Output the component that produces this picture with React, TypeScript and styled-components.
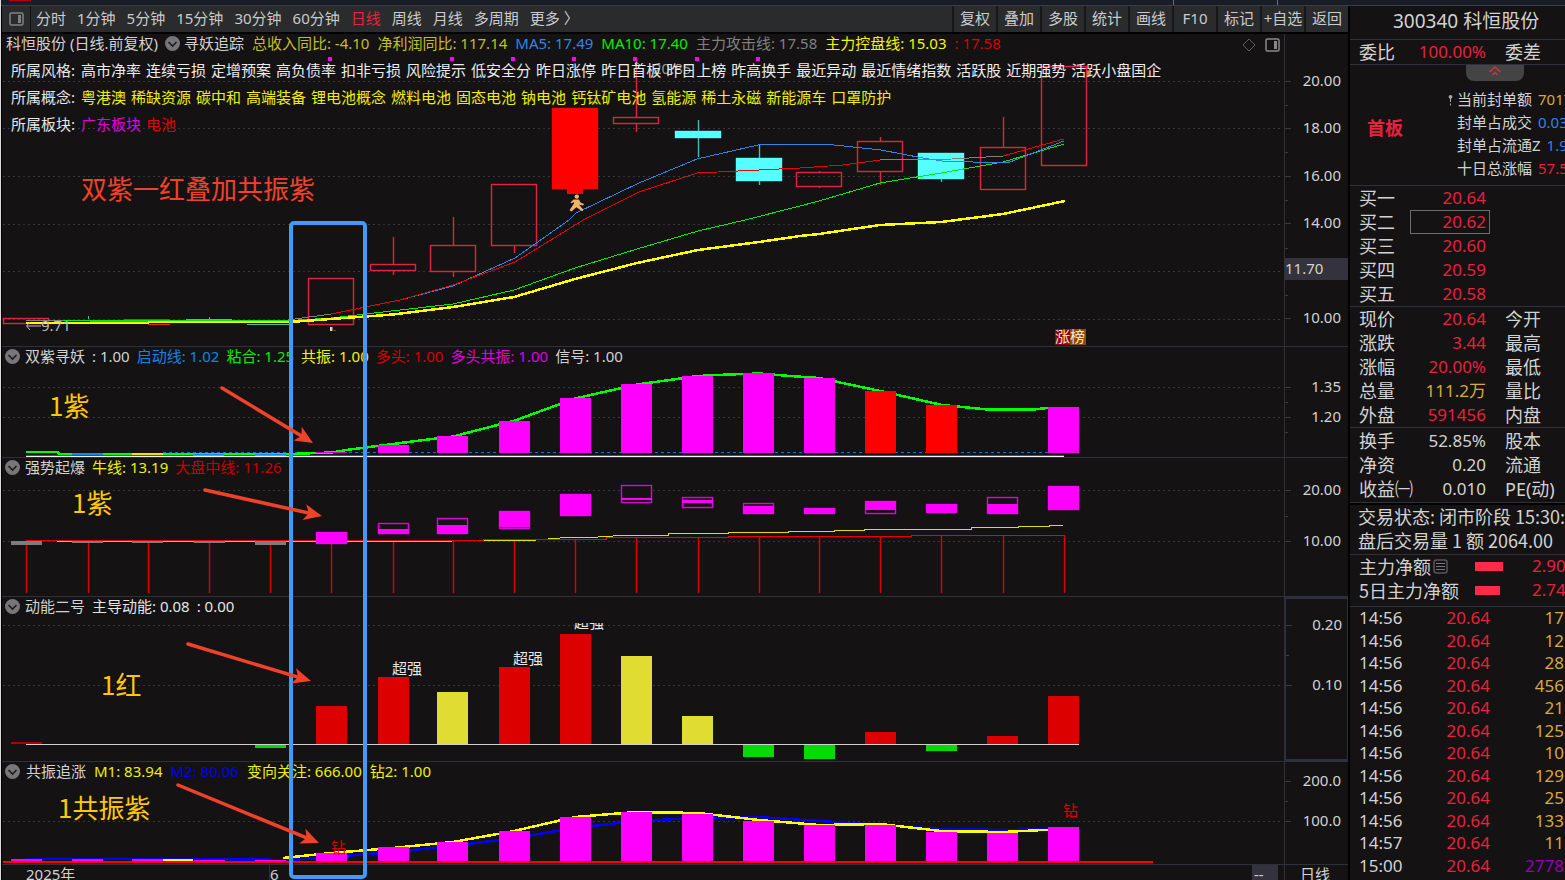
import React from "react";
import styled, { createGlobalStyle, css } from "styled-components";

const LATIN = `"Noto Sans", "Noto Sans CJK SC", sans-serif`;
const CJK = `"Noto Sans CJK SC", "Noto Sans", sans-serif`;

const c = {
  bg: "#141213",
  line: "#2f3138",
  text: "#d2d2d2",
  red: "#e8213c",
  blue: "#2f86e6",
  gold: "#d9a93a",
  magenta: "#ff00ff",
  yellow: "#ffff00",
  green: "#00f000",
  cyan: "#55ffff",
  gray: "#808080",
};

const GlobalStyle = createGlobalStyle`
  * { box-sizing: border-box; }
  body { margin: 0; background: ${c.bg}; }
  button { font: inherit; color: inherit; background: none; border: 0; padding: 0; margin: 0; cursor: pointer; }
  table { border-collapse: collapse; border-spacing: 0; }
  th, td { padding: 0; font-weight: 400; text-align: left; }
`;

/* ---------- page frame ---------- */

const Page = styled.div`
  display: flex;
  flex-direction: column;
  height: 100vh;
  overflow: hidden;
  border-left: 1px solid #dcdcdc;
  background: ${c.bg};
  color: ${c.text};
  font-family: ${LATIN};
  font-size: 15px;
  line-height: 20px;
  white-space: nowrap;
`;

const TopStrip = styled.div`
  flex: none;
  display: flex;
  justify-content: flex-end;
  gap: 103px;
  height: 6px;
  padding-right: 287px;
  background: linear-gradient(#b80010, #b80010) 8px 0 / 22px 1px no-repeat, #181d27;
  border-bottom: 1px solid #393d44;
`;

const StripMark = styled.i`
  width: 1px;
  background: #6a6d73;
`;

const Columns = styled.div`
  flex: 1;
  display: flex;
  min-height: 0;
`;

const Main = styled.main`
  flex: 1;
  min-width: 0;
  display: flex;
  flex-direction: column;
  border-left: 1px solid #000;
`;

/* ---------- toolbar ---------- */

const Toolbar = styled.nav`
  flex: none;
  display: flex;
  align-items: stretch;
  height: 28px;
  background: #2a2b2d;
  border-bottom: 2px solid #000;
  color: #c9cbcd;
`;

const LayoutButton = styled.button`
  display: flex;
  align-items: center;
  justify-content: center;
  width: 29px;
  border-right: 1px solid #101011;
`;

const Periods = styled.div`
  flex: 1;
  display: flex;
  align-items: center;
  gap: 11px;
  padding: 0 0 2px 5px;
`;

const Period = styled.button<{ $active?: boolean }>`
  color: ${(p) => (p.$active ? c.red : "inherit")};
`;

const Tool = styled.button`
  width: 44px;
  padding-bottom: 2px;
  border-left: 2px solid #171718;
  text-align: center;
`;

/* ---------- chart panels ---------- */

const Stage = styled.div`
  position: relative;
  flex: 1;
  display: flex;
  flex-direction: column;
  min-height: 0;
`;

const Panel = styled.section<{ $h: number }>`
  flex: none;
  display: flex;
  height: ${(p) => p.$h}px;
  border-bottom: 1px solid ${c.line};
`;

const PlotArea = styled.div`
  position: relative;
  flex: 1;
  min-width: 0;
`;

const Axis = styled.div<{ $framed?: boolean }>`
  position: relative;
  flex: none;
  width: 64px;
  border-left: 1px solid ${c.line};
  ${(p) =>
    p.$framed &&
    css`
      border: 2px solid #2c303c;
      border-right-width: 1px;
    `}
`;

const Canvas = styled.svg`
  position: absolute;
  top: 0;
  left: 0;
  width: 100%;
  height: 100%;
  overflow: hidden;
  font-family: ${LATIN};
  font-size: 15px;
`;

const Overlay = styled(Canvas)`
  pointer-events: none;
`;

const Legend = styled.div<{ $gap?: number; $pad?: number }>`
  position: relative;
  display: flex;
  align-items: center;
  gap: ${(p) => p.$gap ?? 7}px;
  height: 18px;
  padding-left: ${(p) => p.$pad ?? 3}px;
`;

const LegendItem = styled.span<{ $color?: string }>`
  color: ${(p) => p.$color ?? c.text};
`;

const Fold = styled.button<{ $inset?: boolean }>`
  display: flex;
  margin-left: ${(p) => (p.$inset ? -1 : 0)}px;
  margin-right: ${(p) => (p.$inset ? -4 : -2)}px;
`;

const LegendTools = styled.div`
  display: flex;
  gap: 9px;
  align-items: center;
  margin-left: auto;
  padding-right: 4px;
`;

const LegendTool = styled.button`
  display: flex;
  padding-top: 3px;
`;

const TagRows = styled.div`
  position: relative;
  display: flex;
  flex-direction: column;
  gap: 7px;
  padding: 8px 0 0 9px;
`;

const TagRow = styled.div<{ $color: string }>`
  display: flex;
  gap: 5px;
  height: 20px;
  color: ${(p) => p.$color};
`;

const TagLabel = styled.span`
  width: 65px;
  color: #e6e6e6;
`;

const PriceTag = styled.span`
  position: absolute;
  top: 224px;
  left: 0;
  width: 63px;
  height: 22px;
  background: #34323c;
`;

const DateRow = styled.footer`
  flex: 1;
  display: flex;
  min-height: 0;
  overflow: hidden;
  line-height: 18px;
`;

const DateCells = styled.div`
  flex: 1;
  display: flex;
  padding-left: 24px;
`;

const DateCell = styled.span<{ $w: number }>`
  width: ${(p) => p.$w}px;
`;

const MonthCell = styled.span`
  border-left: 1px solid ${c.line};
`;

const Dashes = styled.span`
  width: 26px;
  margin: 0 6px 0 auto;
  padding-left: 2px;
  background: #34323c;
`;

const DatePeriod = styled.span`
  width: 64px;
  padding-left: 15px;
  border-left: 1px solid ${c.line};
`;

/* ---------- annotations drawn over the charts ---------- */

const Note = styled.p<{ $x: number; $y: number; $color?: string }>`
  position: absolute;
  left: ${(p) => p.$x}px;
  top: ${(p) => p.$y}px;
  margin: 0;
  color: ${(p) => p.$color ?? "#ffc800"};
  font-family: ${CJK};
  font-size: 26px;
  line-height: 32px;
`;

/* ---------- side panel ---------- */

const Side = styled.aside`
  flex: none;
  width: 217px;
  overflow: hidden;
  border-left: 2px solid #000;
  font-size: 18px;
  line-height: 24px;
`;

const StockName = styled.h1`
  height: 34px;
  margin: 0;
  padding-left: 43px;
  border-bottom: 1px solid ${c.line};
  font-size: 19px;
  font-weight: 400;
  line-height: 31px;
`;

const Block = styled.section<{ $pad?: string; $heavy?: boolean }>`
  padding: ${(p) => p.$pad ?? "0"};
  border-bottom: 1px solid ${c.line};
  ${(p) =>
    p.$heavy &&
    css`
      box-shadow: 0 2px 0 #000;
      margin-bottom: 2px;
    `}
`;

const QuoteTable = styled.table`
  table-layout: fixed;
  width: 260px;
  tr {
    height: 24px;
  }
  th:first-child {
    width: 60px;
    padding-left: 9px;
  }
  td {
    width: 80px;
  }
  th + td + th {
    padding-left: 15px;
  }
`;

const Value = styled.span<{ $color?: string; $boxed?: boolean }>`
  display: block;
  height: 24px;
  padding-right: 4px;
  text-align: right;
  font-size: 17px;
  color: ${(p) => p.$color ?? c.text};
  ${(p) =>
    p.$boxed &&
    css`
      padding-right: 3px;
      line-height: 22px;
      border: 1px solid #6c6c6c;
    `}
`;

const Seal = styled.section`
  display: grid;
  grid-template-columns: 98px 1fr;
  grid-template-rows: 16px 1fr;
  height: 121px;
  border-bottom: 1px solid ${c.line};
  font-size: 15px;
  line-height: 20px;
`;

const Collapse = styled.button`
  grid-column: 1 / -1;
  justify-self: start;
  display: flex;
  justify-content: center;
  width: 58px;
  height: 16px;
  margin-left: 116px;
  padding-top: 1px;
  border-radius: 0 0 8px 8px;
  background: #444445;
`;

const SealBadge = styled.strong`
  padding: 37px 0 0 17px;
  color: ${c.red};
  font-size: 18px;
  font-weight: 700;
`;

const SealList = styled.ul`
  margin: 0;
  padding: 7px 0 0;
  list-style: none;
  line-height: 23px;
`;

const SealRow = styled.li<{ $color: string }>`
  display: flex;
  gap: 6px;
  height: 23px;
  b {
    font-weight: 400;
    color: ${(p) => p.$color};
  }
`;

const SealMark = styled.span`
  display: flex;
  align-items: center;
  justify-content: flex-end;
  width: 5px;
  margin-right: -2px;
`;

const Status = styled.p`
  height: 24px;
  margin: 0;
  padding-left: 8px;
  font-family: ${CJK};
  line-height: 22px;
`;

const Fund = styled.div`
  display: grid;
  grid-template-columns: 125px 57px auto;
  align-items: center;
  height: 24px;
  padding-bottom: 2px;
  line-height: 22px;
`;

const FundLabel = styled.span`
  display: flex;
  align-items: center;
  gap: 2px;
  padding-left: 9px;
  font-family: ${CJK};
`;

const FundBar = styled.i<{ $w: number }>`
  width: ${(p) => p.$w}px;
  height: 9px;
  background: #ff2a48;
`;

const FundValue = styled.span`
  font-size: 17px;
  color: ${c.red};
`;

const Ticks = styled.table`
  width: 214px;
  height: 270px;
  font-size: 17px;
  line-height: 22px;
  td:first-child {
    width: 70px;
    padding-left: 9px;
  }
  td {
    width: 70px;
    color: ${c.red};
    text-align: right;
  }
  td:first-child {
    color: ${c.text};
    text-align: left;
  }
`;

const Volume = styled.td<{ $big?: boolean }>`
  && {
    width: 74px;
    color: ${(p) => (p.$big ? "#9a00b4" : c.gold)};
  }
`;

/* ---------- icons ---------- */

const FoldIcon = () => (
  <svg width="15" height="15" viewBox="0 0 15 15">
    <circle cx="7.5" cy="7.5" r="7.5" fill="#777779" />
    <path d="M3.5 6 7.5 10 11.5 6" fill="none" stroke="#1c1c1d" strokeWidth="1.6" />
  </svg>
);

const SidebarIcon = ({ stroke }: { stroke: string }) => (
  <svg width="15" height="14" viewBox="0 0 15 14">
    <rect x="1" y="1" width="13" height="12" rx="1.5" fill="none" stroke={stroke} strokeWidth="1.5" />
    <rect x="9" y="3" width="3" height="8" fill={stroke} />
  </svg>
);

const DiamondIcon = () => (
  <svg width="14" height="14" viewBox="0 0 14 14">
    <path d="M7 1 13 7 7 13 1 7Z" fill="none" stroke="#5c5c5e" strokeWidth="1" />
  </svg>
);

const ListIcon = () => (
  <svg width="15" height="15" viewBox="0 0 15 15">
    <rect x="1" y="1" width="13" height="13" rx="2.5" fill="none" stroke="#56565a" strokeWidth="1.5" />
    <path d="M3 4.5h9M3 7.5h9M3 10.5h9" stroke="#77777a" />
  </svg>
);

const CollapseIcon = () => (
  <svg width="14" height="10" viewBox="0 0 14 10">
    <path d="M1.5 6 7 1 12.5 6M4.5 9 7 6.5 9.5 9" fill="none" stroke="#d23438" strokeWidth="1.4" />
  </svg>
);

const PinIcon = () => (
  <svg width="5" height="12" viewBox="0 0 5 12">
    <circle cx="2.5" cy="2.8" r="1.9" fill="#a8a8a8" />
    <path d="M2.5 4v4M2.5 9.5v2" stroke="#a8a8a8" />
  </svg>
);

/* ---------- chart drawing ---------- */

const barX = [11, 72, 132, 194, 255, 316, 378, 437, 499, 560, 621, 682, 743, 804, 865, 926, 987, 1048];
const mid = [26, 88, 148, 209, 270, 331, 393, 453, 514, 575, 636, 698, 759, 819, 880, 941, 1003, 1064];
const BAR_W = 31;

type PlotProps = { top: number; grid: number[]; children: React.ReactNode };

const Plot = ({ top, grid, children }: PlotProps) => (
  <Canvas shapeRendering="crispEdges" aria-hidden="true">
    <g transform={`translate(-2 ${-top})`}>
      {grid.map((y) => (
        <line key={y} x1="3" x2="100%" y1={y + 0.5} y2={y + 0.5} stroke="#34363a" strokeDasharray="2 3" />
      ))}
      {children}
    </g>
  </Canvas>
);

type Mark = [number, string];

const AxisScale = ({ top, marks, minor }: { top: number; marks: Mark[]; minor: number[] }) => (
  <Canvas shapeRendering="crispEdges">
    <g transform={`translate(0 ${-top})`}>
      {marks.map(([y]) => (
        <line key={y} x1="0" x2="6" y1={y + 0.5} y2={y + 0.5} stroke="#3a3d44" />
      ))}
      {minor.map((y) => (
        <line key={y} x1="0" x2="3" y1={y + 0.5} y2={y + 0.5} stroke="#3a3d44" />
      ))}
      {marks.map(([y, label]) => (
        <text key={label} x="56" y={y + 5} textAnchor="end" fill={c.text}>
          {label}
        </text>
      ))}
    </g>
  </Canvas>
);

const Line = ({ pts, color, w = 1 }: { pts: string; color: string; w?: number }) => (
  <polyline points={pts} fill="none" stroke={color} strokeWidth={w} />
);

type Candle = { i: number; top: number; bottom: number; high?: number; low?: number; fill?: string };

const candles: Candle[] = [
  { i: 0, top: 318, bottom: 323 },
  { i: 5, top: 278, bottom: 324 },
  { i: 6, top: 264, bottom: 270, high: 237, low: 275 },
  { i: 7, top: 245, bottom: 271, high: 217, low: 277 },
  { i: 8, top: 184, bottom: 245, low: 253 },
  { i: 9, top: 108, bottom: 188, fill: "#ff0000" },
  { i: 10, top: 117, bottom: 123, high: 60, low: 132 },
  { i: 11, top: 131, bottom: 137, high: 120, low: 157, fill: c.cyan },
  { i: 12, top: 158, bottom: 180, high: 145, low: 185, fill: c.cyan },
  { i: 13, top: 172, bottom: 186, high: 171, low: 188 },
  { i: 14, top: 141, bottom: 171, high: 137, low: 185 },
  { i: 15, top: 153, bottom: 178, low: 182, fill: c.cyan },
  { i: 16, top: 147, bottom: 189, high: 117 },
  { i: 17, top: 66, bottom: 165 },
];

const CandleShape = ({ i, top, bottom, high, low, fill }: Candle) => {
  const x = mid[i];
  const wick = fill ? "#3fbcbc" : "#e0233e";
  return (
    <g strokeWidth="1.4" shapeRendering="geometricPrecision">
      {high !== undefined && <line x1={x + 0.5} x2={x + 0.5} y1={high} y2={top} stroke={wick} />}
      {low !== undefined && <line x1={x + 0.5} x2={x + 0.5} y1={bottom} y2={low} stroke={wick} />}
      <rect
        x={x - 22.5}
        y={top + 0.5}
        width="45"
        height={bottom - top}
        fill={fill ?? "none"}
        stroke={fill ?? "#e0233e"}
      />
    </g>
  );
};

const PricePlot = () => (
  <Plot top={34} grid={[81, 128, 176, 224, 271, 319]}>
    {candles.map((k) => (
      <CandleShape key={k.i} {...k} />
    ))}
    <path d="M124 319.5h46M148 324.5h22" stroke="#e0233e" />
    <path d="M186 319.5h46M247 324.5h46M88.5 316v3M209.5 317v2" stroke="#3fbcbc" />
    <path d="M567 188h16v6h-16z" fill="#ff0000" />
    <Line color="#808080" pts="26,320.5 62,320.5 117,321.5 148,321.5 277,321.5 331,314" />
    <Line color={c.green} pts="63,320.5 148,320.5 290,320.5 331,318 400,310 453,304 514,290 575,268 637,249 698,231 745,220 800,206 819,201 880,183 941,173 1003,162 1064,144" />
    <Line color={c.blue} pts="400,300 453,286 475,276 515,258 569,220 576,213 639,183 697,159 758,145 790,144 825,144 881,150 923,158 942,161 1003,163 1010,162 1064,141" />
    <Line color="#f00000" pts="331,314 400,300 453,285 515,262 585,219 639,192 697,173 759,170 800,168 843,165 880,160" />
    <Line color="#808080" pts="880,160 952,159 1003,156" />
    <Line color="#f00000" pts="1003,156 1064,139" />
    <Line color={c.yellow} w={2.5} pts="26,323 147,323 150,322 290,322 331,319 393,314.5 453,307 514,297 575,279 637,263 698,250 759,242 800,236 819,234 880,225 941,222 1003,214 1065,201" />
    {[328, 450, 511, 572, 633, 695, 756].map((x) => (
      <rect key={x} x={x} y="57" width="4" height="4" fill={c.magenta} />
    ))}
    <g shapeRendering="geometricPrecision">
      <path d="M27 326h14M30 322l-3.5 4 3.5 4M636 62l4 3M636 62v6" fill="none" stroke="#bdbdbd" />
      <text x="41" y="331" fill="#bdbdbd">9.71</text>
      <text x="653" y="74" fill="#9a9a9a">20.85</text>
      <g fill="#f3b565">
        <circle cx="576.8" cy="196.6" r="2.2" />
        <path d="M573.5 199.5h5.500l1.500 3 3.500 1.500-.8 1.500-4.200-.8 4.500 5-1.200 1.500-6-4-4.800 4.300-2-1.200 4.300-6.500.3-2-2.300 1.500-1.300-.8z" />
      </g>
      <path d="M330 327h2.500v4h-2.500z" fill="#f6cfa8" />
      <path d="M332.500 330.500h3.500" stroke="#70401c" />
      <path d="M1055 329h15v16h-15z" fill="#8a0404" />
      <path d="M1070 329h16v16h-16z" fill="#8f4a08" />
      <text x="1055" y="342" fill="#f2e6dc">涨榜</text>
    </g>
  </Plot>
);

const resonance: [number, number, string][] = [
  [5, 452, "#d000d0"],
  [6, 445, c.magenta],
  [7, 436, c.magenta],
  [8, 421, c.magenta],
  [9, 398, c.magenta],
  [10, 384, c.magenta],
  [11, 376, c.magenta],
  [12, 373, c.magenta],
  [13, 378, c.magenta],
  [14, 391, "#ff0000"],
  [15, 405, "#ff0000"],
  [17, 407, c.magenta],
];

const ResonancePlot = () => (
  <Plot top={347} grid={[387, 417]}>
    <line x1="163" x2="1049" y1="452.5" y2="452.5" stroke="#0a78c8" strokeDasharray="3 3" />
    <Line color="#00ff00" w={2.5} pts="26,452 57,452 60,454 290,454 331,452.5 350,449.500 393,444 420,440.500 453,436.500 515,420.500 575,398.500 637,384.500 698,376 728,374.500 760,373.500 790,376 819,378 880,391 942,405 988,409.500 1033,409.500 1048,408" />
    <path d="M72 454h31M193 454.5h31M255 454.5h31" stroke="#0c8cf0" strokeWidth="2" />
    <path d="M132 454h31" stroke="#e6e600" strokeWidth="2" />
    {resonance.map(([i, y, color]) => (
      <rect key={i} x={barX[i]} y={y} width={BAR_W} height={453 - y} fill={color} />
    ))}
    <line
      x1="26"
      x2="1064"
      y1="456.5"
      y2="456.5"
      stroke="#f2f2f2"
      strokeWidth="1.4"
      shapeRendering="geometricPrecision"
    />
  </Plot>
);

/* Each box: bar index, frame top and bottom, filled part top and bottom. */
const boxes: [number, number, number, number, number][] = [
  [5, 532, 543, 532, 543],
  [6, 523, 533, 529, 533],
  [7, 518, 533, 525, 533],
  [8, 511, 528, 511, 526],
  [9, 494, 515, 494, 515],
  [10, 485, 502, 498, 499],
  [11, 497, 507, 500, 502],
  [12, 503, 513, 506, 513],
  [13, 508, 513, 508, 513],
  [14, 501, 513, 501, 509],
  [15, 504, 512, 504, 512],
  [16, 497, 513, 504, 513],
  [17, 486, 509, 486, 509],
];

/* Height at which each vertical meets the market line. */
const stemTop = [541, 541, 541, 541, 541, 541, 541, 541, 540, 539, 538, 538, 537, 537, 537, 536, 536, 535];

const BreakoutPlot = () => (
  <Plot top={458} grid={[490, 541]}>
    <g stroke="#e00000" strokeWidth="1.4" shapeRendering="geometricPrecision">
      {mid.map((x, i) => (
        <line key={x} x1={x + 0.5} x2={x + 0.5} y1={stemTop[i]} y2="593" />
      ))}
    </g>
    <Line color="#e0e000" pts="57,541.5 422,541.5 483,540.5 530,540.5 560,538 591,537.5 621,535.5 668,535.5 668,533.5 728,533.5 728,532.5 788,532.5 788,531.5 834,531.5 834,530.5 864,530.5 864,529.5 971,529.5 971,527.5 1018,527.5 1018,526.5 1049,526.5 1049,525.5 1063,525.5" />
    <Line color="#f00000" pts="26,540.5 483,540.5 483,539.5 606,539.5 606,537.5 728,537.5 728,536.5 911,536.5 911,535.5 1065,535.5" />
    {[0, 1, 2, 3, 4].map((i) => (
      <rect key={i} x={barX[i]} y="541" width={BAR_W} height={i % 4 === 0 ? 4 : 2} fill="#7d7d7d" />
    ))}
    {boxes.map(([i, top, bottom, from, to]) => (
      <g key={i}>
        <rect
          x={barX[i] + 0.5}
          y={top + 0.5}
          width={BAR_W - 1}
          height={bottom - top}
          fill={c.bg}
          stroke="#e000e0"
          strokeWidth="1.4"
          shapeRendering="geometricPrecision"
        />
        <rect x={barX[i]} y={from} width={BAR_W} height={to - from + 1} fill={c.magenta} />
      </g>
    ))}
  </Plot>
);

const momentum: [number, number, number, string][] = [
  [0, 742, 744, "#b40000"],
  [4, 744, 748, "#00dc00"],
  [5, 706, 744, "#dc0000"],
  [6, 677, 744, "#dc0000"],
  [7, 692, 744, "#e0dc32"],
  [8, 667, 744, "#dc0000"],
  [9, 634, 744, "#dc0000"],
  [10, 656, 744, "#e0dc32"],
  [11, 716, 744, "#e0dc32"],
  [12, 744, 757, "#00dc00"],
  [13, 744, 759, "#00dc00"],
  [14, 732, 744, "#dc0000"],
  [15, 744, 751, "#00dc00"],
  [16, 736, 744, "#dc0000"],
  [17, 696, 744, "#dc0000"],
];

const MomentumPlot = () => (
  <Plot top={597} grid={[625, 685]}>
    <clipPath id="upper-edge">
      <path d="M560 623h60v8h-60z" />
    </clipPath>
    {momentum.map(([i, top, bottom, color]) => (
      <rect key={i} x={barX[i]} y={top} width={BAR_W} height={bottom - top} fill={color} />
    ))}
    <line x1="26" x2="1079" y1="744" y2="744" stroke="#d0d0d0" />
    <g fill="#e6e6e6">
      <text x="392" y="674">超强</text>
      <text x="513" y="664">超强</text>
      <text x="574" y="628" clipPath="url(#upper-edge)">超强</text>
    </g>
  </Plot>
);

const chaseTops = [859, 859, 859, 860, 860, 853, 847, 842, 831, 817, 812, 814, 821, 825, 825, 832, 833, 827];

const ChasePlot = () => (
  <Plot top={762} grid={[821]}>
    <Line color="#0000f5" w={2.5} pts="26,859 209,859 290,860 331,857 393,852 453,846 514,838 575,828 636,821 698,818 759,817 819,821 880,825 941,829 1003,830 1064,829" />
    <Line color={c.yellow} w={2} pts="163,860 193,860" />
    <Line color={c.yellow} w={2.5} pts="283,858 331,853 393,848 453,842 514,831 575,817 636,812 698,813 759,820 819,825 880,824 941,831 1003,832 1064,829" />
    {chaseTops.map((y, i) => (
      <rect key={i} x={barX[i]} y={y} width={BAR_W} height={862 - y} fill={c.magenta} />
    ))}
    <line x1="3" x2="1153" y1="862" y2="862" stroke="#ff0000" strokeWidth="2" />
    <text x="331" y="853" fill="#e00000">钻</text>
    <text x="1063" y="816" fill="#e00000">钻</text>
  </Plot>
);

const Arrow = ({ from, to }: { from: [number, number]; to: [number, number] }) => {
  const angle = (Math.atan2(to[1] - from[1], to[0] - from[0]) * 180) / Math.PI;
  const length = Math.hypot(to[0] - from[0], to[1] - from[1]);
  return (
    <g transform={`translate(${from[0]} ${from[1]}) rotate(${angle})`}>
      <path d={`M0 0H${length - 10}`} stroke="#f04228" strokeWidth="3.5" strokeLinecap="round" />
      <path d={`M${length} 0l-18 -8 4.500 8 -4.500 8z`} fill="#f04228" />
    </g>
  );
};

const Annotations = () => (
  <>
    <Overlay aria-hidden="true">
      <g transform="translate(-2 -34)">
        <rect x="291" y="223" width="74" height="654" rx="3" fill="none" stroke="#4299f8" strokeWidth="4" />
        <Arrow from={[222, 388]} to={[313, 443]} />
        <Arrow from={[205, 490]} to={[322, 516]} />
        <Arrow from={[188, 644]} to={[311, 681]} />
        <Arrow from={[178, 785]} to={[319, 843]} />
      </g>
    </Overlay>
    <Note $x={79} $y={138} $color="#f04228">双紫一红叠加共振紫</Note>
    <Note $x={47} $y={355}>1紫</Note>
    <Note $x={70} $y={452}>1紫</Note>
    <Note $x={99} $y={634}>1红</Note>
    <Note $x={56} $y={757}>1共振紫</Note>
  </>
);

/* ---------- data ---------- */

const periods = ["分时", "1分钟", "5分钟", "15分钟", "30分钟", "60分钟", "日线", "周线", "月线", "多周期", "更多 〉"];
const tools = ["复权", "叠加", "多股", "统计", "画线", "F10", "标记", "+自选", "返回"];

const styles = "高市净率 连续亏损 定增预案 高负债率 扣非亏损 风险提示 低安全分 昨日涨停 昨日首板 昨日上榜 昨高换手 最近异动 最近情绪指数 活跃股 近期强势 活跃小盘国企".split(" ");
const concepts = "粤港澳 稀缺资源 碳中和 高端装备 锂电池概念 燃料电池 固态电池 钠电池 钙钛矿电池 氢能源 稀土永磁 新能源车 口罩防护".split(" ");

type Item = [string, string?];

const LegendLine = ({ name, items, gap }: { name: string; items: Item[]; gap?: number }) => (
  <Legend $gap={gap}>
    <Fold aria-label={`${name} 菜单`}>
      <FoldIcon />
    </Fold>
    <LegendItem>{name}</LegendItem>
    {items.map(([text, color]) => (
      <LegendItem key={text} $color={color}>
        {text}
      </LegendItem>
    ))}
  </Legend>
);

const bids = [
  ["买一", "20.64"],
  ["买二", "20.62"],
  ["买三", "20.60"],
  ["买四", "20.59"],
  ["买五", "20.58"],
];

type Quote = [string, string, string, string?];

const quotes: Quote[] = [
  ["现价", "20.64", "今开", c.red],
  ["涨跌", "3.44", "最高", c.red],
  ["涨幅", "20.00%", "最低", c.red],
  ["总量", "111.2万", "量比", c.gold],
  ["外盘", "591456", "内盘", c.red],
];

const basics: Quote[] = [
  ["换手", "52.85%", "股本"],
  ["净资", "0.20", "流通"],
  ["收益㈠", "0.010", "PE(动)"],
];

const sealInfo: [string, string, string][] = [
  ["当前封单额", "7017", c.gold],
  ["封单占成交", "0.03", c.blue],
  ["封单占流通Z", "1.9", c.blue],
  ["十日总涨幅", "57.5", c.red],
];

const deals = [
  ["14:56", "17"],
  ["14:56", "12"],
  ["14:56", "28"],
  ["14:56", "456"],
  ["14:56", "21"],
  ["14:56", "125"],
  ["14:56", "10"],
  ["14:56", "129"],
  ["14:56", "25"],
  ["14:56", "133"],
  ["14:57", "11"],
  ["15:00", "2778"],
];

const QuoteRows = ({ rows }: { rows: Quote[] }) => (
  <QuoteTable>
    <tbody>
      {rows.map(([label, value, next, color]) => (
        <tr key={label}>
          <th scope="row">{label}</th>
          <td>
            <Value $color={color}>{value}</Value>
          </td>
          <th scope="row">{next}</th>
        </tr>
      ))}
    </tbody>
  </QuoteTable>
);

const SidePanel = () => (
  <Side>
    <StockName>300340 科恒股份</StockName>
    <Block>
      <QuoteRows rows={[["委比", "100.00%", "委差", c.red]]} />
    </Block>
    <Seal>
      <Collapse aria-label="收起">
        <CollapseIcon />
      </Collapse>
      <SealBadge>首板</SealBadge>
      <SealList>
        {sealInfo.map(([label, value, color], i) => (
          <SealRow key={label} $color={color}>
            <SealMark>{i === 0 && <PinIcon />}</SealMark>
            <span>{label}</span>
            <b>{value}</b>
          </SealRow>
        ))}
      </SealList>
    </Seal>
    <Block>
      <QuoteTable>
        <tbody>
          {bids.map(([label, price], i) => (
            <tr key={label}>
              <th scope="row">{label}</th>
              <td>
                <Value $color={c.red} $boxed={i === 1}>
                  {price}
                </Value>
              </td>
              <th />
            </tr>
          ))}
        </tbody>
      </QuoteTable>
    </Block>
    <Block>
      <QuoteRows rows={quotes} />
    </Block>
    <Block $pad="1px 0" $heavy>
      <QuoteRows rows={basics} />
    </Block>
    <Block $pad="0 0 1px">
      <Status>交易状态: 闭市阶段 15:30:00</Status>
      <Status>盘后交易量 1 额 2064.00</Status>
    </Block>
    <Block $pad="0 0 3px">
      <Fund>
        <FundLabel>
          主力净额
          <ListIcon />
        </FundLabel>
        <FundBar $w={28} />
        <FundValue>2.90</FundValue>
      </Fund>
      <Fund>
        <FundLabel>5日主力净额</FundLabel>
        <FundBar $w={25} />
        <FundValue>2.74</FundValue>
      </Fund>
    </Block>
    <Ticks>
      <tbody>
        {deals.map(([time, volume], i) => (
          <tr key={i}>
            <td>{time}</td>
            <td>20.64</td>
            <Volume $big={volume === "2778"}>{volume}</Volume>
          </tr>
        ))}
      </tbody>
    </Ticks>
  </Side>
);

export default function App() {
  return (
    <Page>
      <GlobalStyle />
      <TopStrip>
        <StripMark />
        <StripMark />
      </TopStrip>
      <Columns>
        <Main>
          <Toolbar>
            <LayoutButton aria-label="侧栏">
              <SidebarIcon stroke="#808284" />
            </LayoutButton>
            <Periods>
              {periods.map((p) => (
                <Period key={p} $active={p === "日线"}>
                  {p}
                </Period>
              ))}
            </Periods>
            {tools.map((t) => (
              <Tool key={t}>{t}</Tool>
            ))}
          </Toolbar>
          <Stage>
            <Panel $h={313}>
              <PlotArea>
                <PricePlot />
                <Legend $gap={8} $pad={4}>
                  <LegendItem>科恒股份 (日线.前复权)</LegendItem>
                  <Fold $inset aria-label="寻妖追踪 菜单">
                    <FoldIcon />
                  </Fold>
                  <LegendItem>寻妖追踪</LegendItem>
                  <LegendItem $color="#c3bf22">总收入同比: -4.10</LegendItem>
                  <LegendItem $color="#c3bf22">净利润同比: 117.14</LegendItem>
                  <LegendItem $color={c.blue}>MA5: 17.49</LegendItem>
                  <LegendItem $color={c.green}>MA10: 17.40</LegendItem>
                  <LegendItem $color={c.gray}>主力攻击线: 17.58</LegendItem>
                  <LegendItem $color="#f5f500">主力控盘线: 15.03</LegendItem>
                  <LegendItem $color="#d80000">: 17.58</LegendItem>
                  <LegendTools>
                    <LegendTool aria-label="标记">
                      <DiamondIcon />
                    </LegendTool>
                    <LegendTool aria-label="侧栏">
                      <SidebarIcon stroke="#8a8a8c" />
                    </LegendTool>
                  </LegendTools>
                </Legend>
                <TagRows>
                  <TagRow $color="#ececec">
                    <TagLabel>所属风格:</TagLabel>
                    {styles.map((t) => (
                      <span key={t}>{t}</span>
                    ))}
                  </TagRow>
                  <TagRow $color="#f0f000">
                    <TagLabel>所属概念:</TagLabel>
                    {concepts.map((t) => (
                      <span key={t}>{t}</span>
                    ))}
                  </TagRow>
                  <TagRow $color="#e000e0">
                    <TagLabel>所属板块:</TagLabel>
                    <span>广东板块</span>
                    <LegendItem $color="#e60000">电池</LegendItem>
                  </TagRow>
                </TagRows>
              </PlotArea>
              <Axis>
                <AxisScale
                  top={34}
                  marks={[
                    [81, "20.00"],
                    [128, "18.00"],
                    [176, "16.00"],
                    [223, "14.00"],
                    [318, "10.00"],
                  ]}
                  minor={[105, 152, 200, 248, 295]}
                />
                <PriceTag>11.70</PriceTag>
              </Axis>
            </Panel>
            <Panel $h={111}>
              <PlotArea>
                <ResonancePlot />
                <LegendLine
                  name="双紫寻妖"
                  items={[
                    [": 1.00"],
                    ["启动线: 1.02", "#0c86e8"],
                    ["粘合: 1.25", c.green],
                    ["共振: 1.00", "#f5f500"],
                    ["多头: 1.00", "#d80000"],
                    ["多头共振: 1.00", "#e000e0"],
                    ["信号: 1.00"],
                  ]}
                />
              </PlotArea>
              <Axis>
                <AxisScale top={347} marks={[[387, "1.35"], [417, "1.20"]]} minor={[402, 432]} />
              </Axis>
            </Panel>
            <Panel $h={139}>
              <PlotArea>
                <BreakoutPlot />
                <LegendLine
                  name="强势起爆"
                  items={[
                    ["牛线: 13.19", "#f0f000"],
                    ["大盘中线: 11.26", "#c80000"],
                  ]}
                />
              </PlotArea>
              <Axis>
                <AxisScale top={458} marks={[[490, "20.00"], [541, "10.00"]]} minor={[516]} />
              </Axis>
            </Panel>
            <Panel $h={165}>
              <PlotArea>
                <MomentumPlot />
                <LegendLine name="动能二号" items={[["主导动能: 0.08", "#e6e6e6"], [": 0.00", "#e6e6e6"]]} />
              </PlotArea>
              <Axis $framed>
                <AxisScale top={599} marks={[[625, "0.20"], [685, "0.10"]]} minor={[655]} />
              </Axis>
            </Panel>
            <Panel $h={103}>
              <PlotArea>
                <ChasePlot />
                <LegendLine
                  name="共振追涨"
                  gap={8}
                  items={[
                    ["M1: 83.94", "#f0f000"],
                    ["M2: 80.06", "#0000f0"],
                    ["变向关注: 666.00", "#f0f000"],
                    ["钻2: 1.00", "#f0f000"],
                  ]}
                />
              </PlotArea>
              <Axis>
                <AxisScale top={762} marks={[[781, "200.0"], [821, "100.0"]]} minor={[801]} />
              </Axis>
            </Panel>
            <DateRow>
              <DateCells>
                <DateCell $w={243}>2025年</DateCell>
                <MonthCell>6</MonthCell>
                <Dashes>--</Dashes>
              </DateCells>
              <DatePeriod>日线</DatePeriod>
            </DateRow>
            <Annotations />
          </Stage>
        </Main>
        <SidePanel />
      </Columns>
    </Page>
  );
}
